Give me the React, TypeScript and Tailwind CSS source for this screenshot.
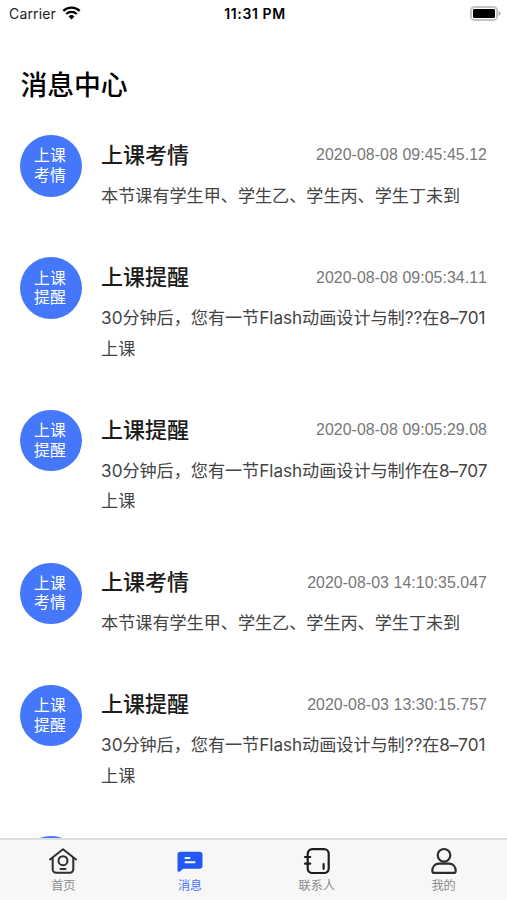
import React from "react";

type Message = {
  kind: string;
  title: string;
  time: string;
  body: string;
};

const messages: Message[] = [
  {
    kind: "考情",
    title: "上课考情",
    time: "2020-08-08 09:45:45.12",
    body: "本节课有学生甲、学生乙、学生丙、学生丁未到",
  },
  {
    kind: "提醒",
    title: "上课提醒",
    time: "2020-08-08 09:05:34.11",
    body: "30分钟后，您有一节Flash动画设计与制??在8–701上课",
  },
  {
    kind: "提醒",
    title: "上课提醒",
    time: "2020-08-08 09:05:29.08",
    body: "30分钟后，您有一节Flash动画设计与制作在8–707上课",
  },
  {
    kind: "考情",
    title: "上课考情",
    time: "2020-08-03 14:10:35.047",
    body: "本节课有学生甲、学生乙、学生丙、学生丁未到",
  },
  {
    kind: "提醒",
    title: "上课提醒",
    time: "2020-08-03 13:30:15.757",
    body: "30分钟后，您有一节Flash动画设计与制??在8–701上课",
  },
];

const StatusBar = () => (
  <div className="grid h-[27px] shrink-0 grid-cols-3 items-center pl-[9px] pr-[6px] font-['Inter','Noto_Sans_CJK_SC',sans-serif] text-black">
    <div className="flex items-center gap-[6px]">
      <span className="text-[14px] tracking-[0.15px] text-[#222]">Carrier</span>
      <svg className="-mt-px" width="19" height="14" viewBox="0 0 19 14" fill="none">
        <path d="M1.3 4.9a11.8 11.8 0 0 1 16.4 0" stroke="currentColor" strokeWidth="2.4" />
        <path d="M4.2 8a7.6 7.6 0 0 1 10.6 0" stroke="currentColor" strokeWidth="2.2" />
        <path d="M9.5 13.4 6.6 10.5a4.1 4.1 0 0 1 5.8 0Z" fill="currentColor" />
      </svg>
    </div>
    <span className="whitespace-nowrap text-center text-[14px] font-semibold tracking-[0.6px] [font-kerning:none]">
      11:31 PM
    </span>
    <svg className="-mt-px justify-self-end" width="31" height="15" viewBox="0 0 31 15" fill="none">
      <rect x="1" y="1" width="26" height="13" rx="3.6" fill="#fff" stroke="#c4c4c4" strokeWidth="2" />
      <rect x="3" y="3" width="22" height="9" rx="1.2" fill="#000" />
      <path d="M28.6 5v5c1.1-.4 1.8-1.4 1.8-2.5S29.7 5.4 28.6 5Z" fill="#a3a3a3" />
    </svg>
  </div>
);

const Badge = ({ kind }: { kind?: string }) => (
  <div className="flex size-[61.2px] shrink-0 flex-col items-center justify-center rounded-full bg-[#4577fb] pr-[2px] text-[15.9px] leading-[19.5px] text-white">
    {kind && (
      <>
        <span>上课</span>
        <span>{kind}</span>
      </>
    )}
  </div>
);

const MessageItem = ({ kind, title, time, body }: Message) => (
  <li className="flex gap-[19.5px]">
    <Badge kind={kind} />
    <div className="min-w-0 flex-1 pt-[5px]">
      <div className="flex h-[30px] items-center justify-between">
        <h2 className="text-[22px] font-medium text-[#1c1c1c]">{title}</h2>
        <time className="font-['Liberation_Sans',sans-serif] text-[15.9px] tracking-[0.06px] text-[#777] [font-kerning:none]">
          {time}
        </time>
      </div>
      <p className="-mr-1 mt-[10.5px] text-[17.15px] leading-[30.6px] tracking-[-0.04px] text-[#444]">
        {body}
      </p>
    </div>
  </li>
);

const HomeIcon = () => (
  <svg width="28" height="26" viewBox="0 0 28 26" fill="none" stroke="#2e2e2e" strokeWidth="2" strokeLinecap="round" strokeLinejoin="round">
    <path d="M1 11.5 14 1.2l13 10.3" />
    <path d="M3.7 10v11.2a3.5 3.5 0 0 0 3.5 3.5h13.6a3.5 3.5 0 0 0 3.5-3.5V10" />
    <circle cx="14" cy="12.7" r="4.5" />
    <path d="M11.5 21h5" />
  </svg>
);

const MessageIcon = () => (
  <svg width="26" height="26" viewBox="0 0 26 26" fill="none">
    <path d="M3.5 3.7h19a3 3 0 0 1 3 3v11a3 3 0 0 1-3 3H6.2L2.9 23.4c-1 .8-2.400.2-2.400-1.200V6.7a3 3 0 0 1 3-3Z" fill="#2358f5" />
    <path d="M8.500 9.9h4M8.500 14.300h9" stroke="#fff" strokeWidth="2" strokeLinecap="round" />
  </svg>
);

const ContactsIcon = () => (
  <svg width="28" height="28" viewBox="0 0 28 28" fill="none" stroke="#1d1d1d" strokeWidth="2.2" strokeLinecap="round">
    <rect x="4.7" y="2.2" width="21" height="23.8" rx="4.5" />
    <path d="M2 10h5.2M2 16.7h5.2M20.6 17.2v4.6" />
  </svg>
);

const ProfileIcon = () => (
  <svg width="28" height="28" viewBox="0 0 28 28" fill="none" stroke="#2b2b2b" strokeWidth="2.2">
    <circle cx="14" cy="8.3" r="6.3" />
    <path d="M9 16.6h10c4 0 6.7 3 6.7 7.3 0 1.3-.7 2-2 2H4.3c-1.3 0-2-.7-2-2 0-4.3 2.700-7.300 6.700-7.300Z" strokeLinejoin="round" />
  </svg>
);

const tabs = [
  { label: "首页", icon: <HomeIcon /> },
  { label: "消息", icon: <MessageIcon />, active: true },
  { label: "联系人", icon: <ContactsIcon /> },
  { label: "我的", icon: <ProfileIcon /> },
];

const TabBar = () => (
  <nav className="grid h-[62px] shrink-0 grid-cols-4 border-t-2 border-[#dedede] bg-[#f7f7f7]">
    {tabs.map((tab) => (
      <div key={tab.label} className="flex flex-col items-center pt-[7px]">
        <div className="flex h-7 items-center">{tab.icon}</div>
        <span
          className={
            tab.active
              ? "mt-px text-[12.2px] leading-[19px] text-[#4d74f2]"
              : "mt-px text-[12.2px] leading-[19px] text-[#8c8c8c]"
          }
        >
          {tab.label}
        </span>
      </div>
    ))}
  </nav>
);

export default function App() {
  return (
    <div className="flex h-[900px] w-[507px] flex-col overflow-hidden bg-white font-['Inter','Noto_Sans_CJK_SC',sans-serif]">
      <StatusBar />
      <main className="min-h-0 flex-1 overflow-hidden pl-[20.4px] pr-5">
        <h1 className="mt-[38px] text-[26.8px] font-medium leading-10 text-black">
          消息中心
        </h1>
        <ul className="mt-[30.4px] flex flex-col gap-[46px]">
          {messages.map((message) => (
            <MessageItem key={message.time} {...message} />
          ))}
          {/* next message, only the top of its badge is in view */}
          <li className="-mt-[2px]">
            <Badge />
          </li>
        </ul>
      </main>
      <TabBar />
    </div>
  );
}
